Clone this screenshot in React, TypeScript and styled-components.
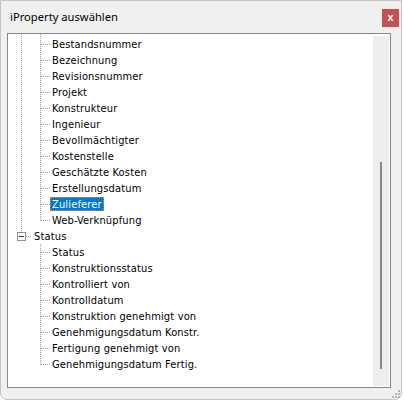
import styled, { createGlobalStyle } from "styled-components";

const GlobalStyle = createGlobalStyle`
  html, body {
    margin: 0;
    padding: 0;
    background: #ffffff;
  }
`;

const Window = styled.div`
  position: relative;
  box-sizing: border-box;
  width: 402px;
  height: 400px;
  background: #f0f0f0;
  border: 1px solid #c4c4c4;
  border-radius: 0 0 7px 7px;
  display: flex;
  flex-direction: column;
`;

const TitleBar = styled.div`
  height: 32px;
  display: flex;
  justify-content: space-between;
  align-items: flex-start;
  padding: 0 2px 0 9px;
  box-sizing: border-box;
`;

const Title = styled.div`
  font-family: "Noto Sans", "Open Sans", sans-serif;
  font-size: 11.2px;
  line-height: 16px;
  padding-top: 8px;
  color: #000;
`;

const CloseButton = styled.div`
  margin-top: 8px;
  width: 17px;
  height: 18px;
  background: #c75050;
  color: #fff;
  display: flex;
  align-items: center;
  justify-content: center;
  font-family: "Liberation Sans", Arial, sans-serif;
  font-weight: bold;
  font-size: 11px;
  line-height: 1;
  padding-bottom: 2px;
  box-sizing: border-box;
`;

const Body = styled.div`
  flex: 1;
  padding: 0 10px 11px 6px;
  display: flex;
`;

const TreeBox = styled.div`
  flex: 1;
  display: flex;
  background: #fff;
  border: 1px solid #828790;
  padding-right: 1px;
  overflow: hidden;
`;

const Viewport = styled.div`
  flex: 1;
  overflow: hidden;
`;

const List = styled.div`
  padding-left: 4px;
`;

// rows are 16px; the first one is only the 2px tail of a row scrolled away
const Row = styled.div<{ $height?: number }>`
  display: flex;
  height: ${(p) => p.$height ?? 16}px;
  overflow: hidden;
  align-items: flex-start;
`;

const dotsV = "repeating-linear-gradient(to bottom, #a0a0a0 0 1px, transparent 1px 2px)";
const dotsH = "repeating-linear-gradient(to right, #a0a0a0 0 1px, transparent 1px 2px)";

type Line = "full" | "top" | "none";

const Guide = styled.div<{ $v: Line; $h?: boolean }>`
  width: 19px;
  height: 16px;
  flex: none;
  display: flex;
  align-items: center;
  background-image: ${(p) =>
    [p.$v !== "none" ? dotsV : null, p.$h ? dotsH : null]
      .filter(Boolean)
      .join(", ") || "none"};
  background-repeat: no-repeat;
  background-position: ${(p) =>
    [p.$v !== "none" ? "9px 0" : null, p.$h ? "10px 8px" : null]
      .filter(Boolean)
      .join(", ") || "0 0"};
  background-size: ${(p) =>
    [
      p.$v === "full" ? "1px 16px" : p.$v === "top" ? "1px 9px" : null,
      p.$h ? "9px 1px" : null,
    ]
      .filter(Boolean)
      .join(", ") || "auto"};
`;

const Expander = styled.div`
  box-sizing: border-box;
  width: 9px;
  height: 9px;
  margin-left: 5px;
  margin-top: 1px;
  border: 1px solid #919191;
  background: #fff;
  display: flex;
  align-items: center;
  justify-content: center;

  &::after {
    content: "";
    width: 5px;
    height: 1px;
    background: #1c3a70;
  }
`;

const Label = styled.div<{ $selected?: boolean; $offset?: number }>`
  height: 14px;
  margin-top: 1px;
  margin-left: ${(p) => p.$offset ?? 0}px;
  padding: 0 2px;
  font-family: "DejaVu Sans Condensed", "DejaVu Sans", sans-serif;
  font-size: 11px;
  letter-spacing: 0.15px;
  line-height: 16px;
  white-space: nowrap;
  color: ${(p) => (p.$selected ? "#fff" : "#000")};
  background: ${(p) => (p.$selected ? "#0078d7" : "transparent")};
  outline: ${(p) => (p.$selected ? "1px dotted #ff8728" : "none")};
  outline-offset: -1px;
`;

const Scrollbar = styled.div`
  width: 16px;
  margin: 2px 0 1px;
  background: #eeeeee;
  display: flex;
  justify-content: center;
`;

const Thumb = styled.div`
  width: 2px;
  height: 207px;
  margin-top: 126px;
  background: #888888;
`;

const Grip = styled.svg`
  position: absolute;
  right: 0;
  bottom: 0;
`;

const projectItems = [
  "Bestandsnummer",
  "Bezeichnung",
  "Revisionsnummer",
  "Projekt",
  "Konstrukteur",
  "Ingenieur",
  "Bevollmächtigter",
  "Kostenstelle",
  "Geschätzte Kosten",
  "Erstellungsdatum",
  "Zulieferer",
  "Web-Verknüpfung",
];

const statusItems = [
  "Status",
  "Konstruktionsstatus",
  "Kontrolliert von",
  "Kontrolldatum",
  "Konstruktion genehmigt von",
  "Genehmigungsdatum Konstr.",
  "Fertigung genehmigt von",
  "Genehmigungsdatum Fertig.",
];

function ChildRows({
  items,
  parentHasNext,
  selected,
}: {
  items: string[];
  parentHasNext: boolean;
  selected?: string;
}) {
  return (
    <>
      {items.map((item, idx) => (
        <Row key={item}>
          <Guide $v={parentHasNext ? "full" : "none"} />
          <Guide $v={idx === items.length - 1 ? "top" : "full"} $h />
          <Label $selected={item === selected}>{item}</Label>
        </Row>
      ))}
    </>
  );
}

export default function App() {
  return (
    <>
      <GlobalStyle />
      <Window>
        <TitleBar>
          <Title>iProperty auswählen</Title>
          <CloseButton>x</CloseButton>
        </TitleBar>
        <Body>
          <TreeBox>
            <Viewport>
              <List>
                <Row $height={2}>
                  <Guide $v="full" />
                  <Guide $v="full" />
                </Row>
                <ChildRows items={projectItems} parentHasNext selected="Zulieferer" />
                <Row>
                  <Guide $v="top" $h>
                    <Expander />
                  </Guide>
                  <Label $offset={1}>Status</Label>
                </Row>
                <ChildRows items={statusItems} parentHasNext={false} />
              </List>
            </Viewport>
            <Scrollbar>
              <Thumb />
            </Scrollbar>
          </TreeBox>
        </Body>
        <Grip width="10" height="10" viewBox="0 0 10 10">
          <g fill="#b4b4b4">
            <rect x="7" y="1" width="2" height="2" />
            <rect x="4" y="4" width="2" height="2" />
            <rect x="7" y="4" width="2" height="2" />
            <rect x="1" y="7" width="2" height="2" />
            <rect x="4" y="7" width="2" height="2" />
            <rect x="7" y="7" width="2" height="2" />
          </g>
        </Grip>
      </Window>
    </>
  );
}
